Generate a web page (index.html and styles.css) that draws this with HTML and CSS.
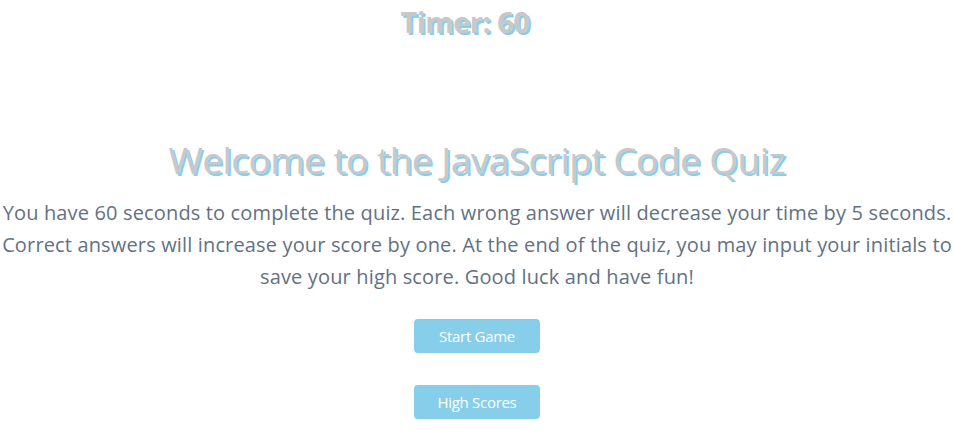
FILE: index.html
```html
<!DOCTYPE html>
<html>
<head>
<meta charset="utf-8">
<link rel="stylesheet" href="styles.css">
</head>
<body>
<header class="timer">Timer: 60</header>
<main class="intro">
  <h1 class="title">Welcome to the JavaScript Code Quiz</h1>
  <p class="desc">You have 60 seconds to complete the quiz. Each wrong answer will decrease your time by 5 seconds. Correct answers will increase your score by one. At the end of the quiz, you may input your initials to save your high score. Good luck and have fun!</p>
  <div class="actions">
    <button class="btn">Start Game</button>
    <button class="btn">High Scores</button>
  </div>
</main>
</body>
</html>
```
FILE: styles.css
```css
html, body {
  margin: 0;
  padding: 0;
  background: #ffffff;
}
body {
  font-family: "Open Sans", "Liberation Sans", sans-serif;
  color: #627184;
  text-align: center;
}
.timer {
  font-size: 29px;
  font-weight: 700;
  color: #c8c8c8;
  text-shadow: 2px 2px 0 #87ceeb;
  line-height: 44px;
  letter-spacing: -0.5px;
  padding-right: 24px;
}
.intro {
  padding-top: 92px;
}
.title {
  margin: 0 0 13px;
  font-size: 37px;
  font-weight: 400;
  color: #c8c8c8;
  text-shadow: 2px 2px 0 #87ceeb;
  line-height: 48px;
  letter-spacing: -0.5px;
}
.desc {
  margin: 0;
  font-size: 20px;
  line-height: 32px;
  letter-spacing: 0.15px;
  padding: 0;
}
.actions {
  display: flex;
  flex-direction: column;
  align-items: center;
  gap: 32px;
  padding-top: 26px;
}
.btn {
  width: 126px;
  height: 34px;
  border: none;
  border-radius: 4px;
  background: #87ceeb;
  color: #ffffff;
  font-family: "Open Sans", "Liberation Sans", sans-serif;
  font-size: 15px;
  letter-spacing: -0.3px;
}
```
